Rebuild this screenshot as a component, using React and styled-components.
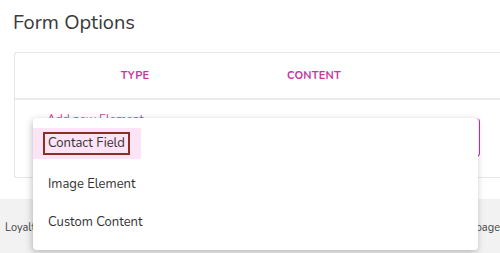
import React from 'react'
import styled, { createGlobalStyle } from 'styled-components'

const GlobalStyle = createGlobalStyle`
  html, body {
    margin: 0;
    padding: 0;
    background: #ffffff;
    font-family: 'Nunito', Lato, 'Noto Sans', sans-serif;
  }
`

const Page = styled.div`
  width: 500px;
  height: 253px;
  overflow: hidden;
  display: flex;
  flex-direction: column;
`

const Title = styled.h2`
  margin: 0;
  padding: 11px 0 0 13px;
  height: 41px;
  box-sizing: border-box;
  font-size: 20px;
  font-weight: 400;
  color: #3a3a3a;
  line-height: 24px;
`

const Card = styled.div`
  margin-left: 14px;
  margin-top: 11px;
  width: 520px;
  border: 1px solid #e6e6e6;
  border-right: none;
  border-radius: 3px 0 0 3px;
`

const HeaderRow = styled.div`
  display: grid;
  grid-template-columns: 240px 1fr;
  height: 45px;
  align-items: center;
  border-bottom: 2px solid #ececec;
`

const HeadCell = styled.div`
  font-size: 11px;
  font-weight: 700;
  letter-spacing: 0.2px;
  color: #c23aa0;
  text-align: ${(p) => p.$align || 'left'};
  padding-left: ${(p) => p.$pad || 0}px;
`

const BodyRow = styled.div`
  position: relative;
  height: 77px;
  display: flex;
  align-items: flex-start;
  padding: 11px 55px 0 32px;
  box-sizing: border-box;
  gap: 40px;
`

const AddLink = styled.span`
  font-size: 12px;
  color: #c8449f;
  line-height: 16px;
`

const SelectBox = styled.div`
  flex: 1;
  margin-top: 7px;
  height: 37px;
  border: 1px solid #b23aa8;
  border-top-color: #f0d3ea;
  border-left-color: #e9b5de;
  border-radius: 4px;
`

const Menu = styled.ul`
  position: absolute;
  left: 18px;
  top: 18px;
  width: 445px;
  height: 132px;
  box-sizing: border-box;
  margin: 0;
  padding: 10px 0 0;
  list-style: none;
  background: #ffffff;
  border-radius: 4px;
  box-shadow: -1px 2px 7px rgba(0, 0, 0, 0.25);
  z-index: 5;
`

const MenuItem = styled.li`
  height: ${(p) => (p.$active ? 37 : 38)}px;
  display: flex;
  align-items: ${(p) => (p.$active ? 'flex-start' : 'center')};
  font-size: 13px;
  color: #333333;
  padding-left: ${(p) => (p.$active ? 0 : 15)}px;
`

const ActiveWrap = styled.span`
  display: inline-flex;
  align-items: center;
  height: 31px;
  padding: 0 11px 0 10px;
  background: #fde3f6;
`

const FocusRing = styled.span`
  display: inline-block;
  padding: 2px 3px;
  border: 2px solid #8c2f22;
  line-height: 15px;
`

const Footer = styled.div`
  margin-top: 21px;
  flex: 1;
  background: #f2f2f2;
  display: flex;
  justify-content: space-between;
  align-items: center;
  padding: 0 0 0 5px;
  font-size: 11px;
  color: #444444;
  white-space: nowrap;
`

const FooterText = styled.span`
  margin-top: 3px;
`

export default function App() {
  return (
    <>
      <GlobalStyle />
      <Page>
        <Title>Form Options</Title>
        <Card>
          <HeaderRow>
            <HeadCell $align="center">TYPE</HeadCell>
            <HeadCell $pad={32}>CONTENT</HeadCell>
          </HeaderRow>
          <BodyRow>
            <AddLink>Add new Element</AddLink>
            <SelectBox />
            <Menu>
              <MenuItem $active>
                <ActiveWrap>
                  <FocusRing>Contact Field</FocusRing>
                </ActiveWrap>
              </MenuItem>
              <MenuItem>Image Element</MenuItem>
              <MenuItem>Custom Content</MenuItem>
            </Menu>
          </BodyRow>
        </Card>
        <Footer>
          <FooterText>Loyalty</FooterText>
          <FooterText>Landing page</FooterText>
        </Footer>
      </Page>
    </>
  )
}
